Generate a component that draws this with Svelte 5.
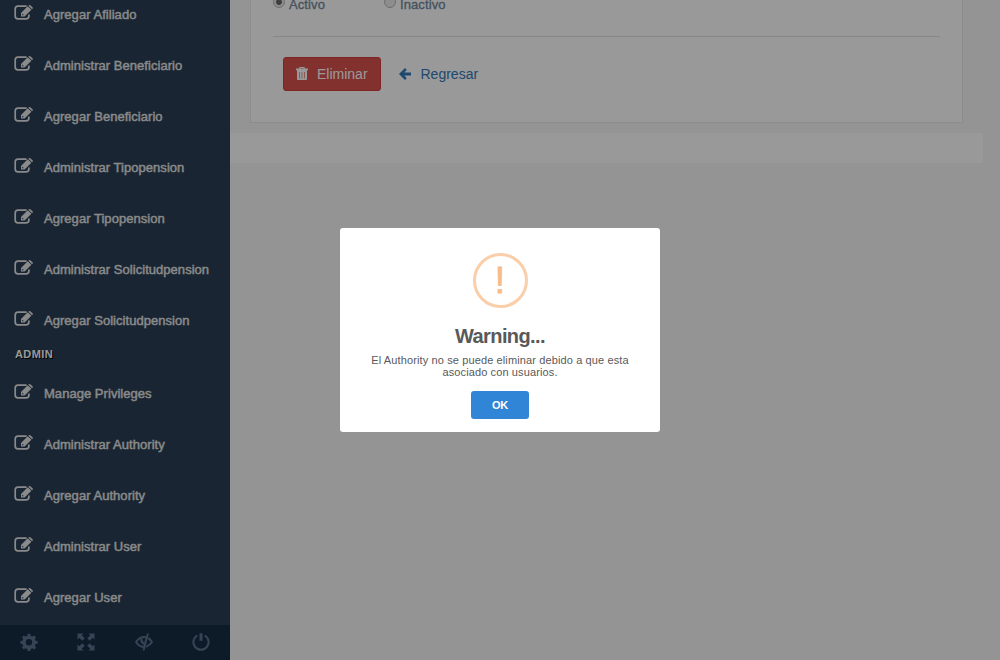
<script>
  const main = [
    'Agregar Afiliado',
    'Administrar Beneficiario',
    'Agregar Beneficiario',
    'Administrar Tipopension',
    'Agregar Tipopension',
    'Administrar Solicitudpension',
    'Agregar Solicitudpension'
  ];
  const admin = [
    'Manage Privileges',
    'Administrar Authority',
    'Agregar Authority',
    'Administrar User',
    'Agregar User'
  ];
</script>

{#snippet menu(items)}
  <ul>
    {#each items as item}
      <li>
        <svg class="edit" viewBox="0 0 19 15">
          <path class="box" d="M12.600 1.200H4Q1.200 1.200 1.200 4v6.900q0 2.900 2.800 2.900h8q2.900 0 2.900-2.900V9.400" />
          <path fill-rule="evenodd" d="M13.700 1.300l3.700 3.500-6.800 6.600H7V8zM8.200 9.200v1.100h1.200l.3-.4-1.100-1.100zM14.400.7l.4-.4q.8-.6 1.500 0l2.200 2q.7.700 0 1.500l-.5.500z" />
        </svg>
        <span>{item}</span>
      </li>
    {/each}
  </ul>
{/snippet}

<div class="page">
  <aside>
    <nav>
      {@render menu(main)}
      <h3>ADMIN</h3>
      {@render menu(admin)}
    </nav>
    <div class="tools">
      <span>
        <svg viewBox="0 0 18 18"><path fill-rule="evenodd" d="M7.700.8h2.600l.4 2.100 1.700.7 1.800-1.200 1.800 1.800-1.200 1.800.7 1.700 2.100.4v2.600l-2.100.4-.7 1.700 1.200 1.800-1.800 1.800-1.800-1.200-1.700.7-.4 2.100H7.700l-.4-2.100-1.700-.7-1.800 1.200L2 14.600l1.200-1.800-.7-1.700-2.100-.4V8.100l2.100-.4.700-1.700L2 4.200l1.800-1.800 1.800 1.200 1.700-.7zM9 6.100a3.200 3.200 0 1 0 0 6.400 3.200 3.200 0 0 0 0-6.400z" /></svg>
      </span>
      <span>
        <svg viewBox="0 0 18 18"><path d="M.5.5h6L4.700 2.300l3 3-2.400 2.400-3-3L.5 6.500zM17.500.5v6l-1.800-1.800-3 3-2.400-2.400 3-3L11.500.5zM.5 17.500v-6l1.800 1.800 3-3 2.400 2.400-3 3 1.800 1.800zM17.500 17.500h-6l1.800-1.800-3-3 2.400-2.400 3 3 1.800-1.800z" /></svg>
      </span>
      <span>
        <svg viewBox="0 0 18 18"><path d="M12 .5h1.900L9.500 17.500H7.600l.7-2.600C4.500 14.500 1.600 12 0 9c2-3.400 5.300-6 9-6l2.300.2zM10.500 5C8 4.600 3.900 6 2.200 9c1.400 2.200 3.600 3.700 6.200 4l.4-1.600C6.800 11 5.400 9.500 5.400 7.500c0-.8.2-1.400.6-2l1.500.7c-.2 1.400.5 2.600 1.900 3.200zM13.700 4C15.500 5.100 17 7 18 9c-1.500 2.700-4.100 4.900-7.200 5.700l.6-2.300c1.900-.7 3.400-1.900 4.300-3.400-.7-1.200-1.600-2.100-2.700-2.800z" /></svg>
      </span>
      <span>
        <svg viewBox="0 0 18 18"><path class="ring" d="M5.300 2.500a7.600 7.600 0 1 0 7.400 0" /><path d="M8 .2h2q.5 0 .5.500v6.600q0 .5-.5.500H8q-.5 0-.5-.5V.7q0-.5.500-.5z" /></svg>
      </span>
    </div>
  </aside>

  <main>
    <section class="panel">
      <div class="radios">
        <label><i class="dot on"></i>Activo</label>
        <label><i class="dot"></i>Inactivo</label>
      </div>
      <hr />
      <div class="actions">
        <button class="danger">
          <svg viewBox="0 0 12 13"><path fill-rule="evenodd" d="M4 0h4q.8 0 .8.800V1.500H12V3.300H0V1.500h3.200V.8Q3.200 0 4 0zm.5.900v.6h3V.9zM1 3.300h10V12q0 1-1 1H2q-1 0-1-1zM3.300 5v6.500h.6V5zm2.400 0v6.500h.6V5zm2.400 0v6.500h.6V5z" /></svg>
          Eliminar
        </button>
        <a href="#back">
          <svg viewBox="0 0 12 12"><path d="M6 0l1.700 1.700L5.400 4.500H12v3H5.400l2.300 2.800L6 12 0 6z" /></svg>
          Regresar
        </a>
      </div>
    </section>
    <footer></footer>
  </main>

  <div class="overlay">
    <div class="modal" role="dialog">
      <div class="warn">!</div>
      <h2>Warning...</h2>
      <p>El Authority no se puede eliminar debido a que esta asociado con usuarios.</p>
      <button class="ok">OK</button>
    </div>
  </div>
</div>

<style>
  :global(body) { margin: 0; }
  * { box-sizing: border-box; }
  .page {
    position: relative;
    display: flex;
    width: 1000px;
    height: 660px;
    overflow: hidden;
    background: #f7f7f7;
    font-family: "Liberation Sans", Arial, sans-serif;
    font-size: 13px;
    color: #73879c;
  }
  svg { display: block; fill: currentColor; flex: none; }
  aside {
    width: 230px;
    height: 660px;
    display: flex;
    flex-direction: column;
    background: #2a3f54;
  }
  nav { height: 625px; overflow: hidden; }
  nav ul { list-style: none; margin: 0; padding: 0; }
  nav ul:first-child { margin-top: -11px; }
  li {
    height: 51px;
    display: flex;
    align-items: center;
    gap: 11px;
    padding-left: 14px;
    color: #e7e7e7;
    letter-spacing: 0.04px;
    -webkit-text-stroke: 0.4px #e7e7e7;
  }
  .edit { width: 19px; height: 15px; margin-bottom: 5px; }
  .box { fill: none; stroke: currentColor; stroke-width: 1.7; }
  h3 {
    height: 22px;
    margin: 0;
    padding: 1px 0 0 15px;
    font-size: 11px;
    line-height: 14px;
    font-weight: bold;
    letter-spacing: 0.4px;
    color: #fff;
    text-shadow: 1px 1px #000;
  }
  .tools {
    height: 35px;
    display: grid;
    grid-template-columns: repeat(4, 1fr);
    background: #172d44;
    color: #5a738e;
  }
  .tools span { display: flex; align-items: center; justify-content: center; padding-bottom: 1px; }
  .tools svg { width: 18px; height: 18px; }
  .ring { fill: none; stroke: currentColor; stroke-width: 2; }
  main { flex: 1; }
  .panel {
    width: 713px;
    height: 123px;
    margin-left: 20px;
    padding: 0 22px;
    border: 1px solid #e6e9ed;
    border-top: 0;
    background: #fff;
  }
  .radios { height: 36px; display: flex; }
  .radios label {
    width: 111px;
    height: 10px;
    display: flex;
    gap: 4px;
    line-height: 9px;
    letter-spacing: 0.1px;
    -webkit-text-stroke: 0.3px #73879c;
  }
  .dot {
    width: 12px;
    height: 12px;
    margin-top: -4px;
    border: 1px solid #b8b8b8;
    border-radius: 50%;
    background: #ececec;
  }
  .on { background: radial-gradient(circle, #6a6a6a 0 2.500px, #ececec 3.500px); }
  hr { width: 667px; height: 1px; margin: 0; border: 0; background: #dfdfdf; }
  .actions { display: flex; align-items: center; gap: 18px; padding: 20px 0 0 10px; font-size: 14px; }
  .danger {
    width: 98px;
    height: 34px;
    display: flex;
    align-items: center;
    gap: 9px;
    padding: 0 12px;
    border: 1px solid #d43f3a;
    border-radius: 3px;
    background: #d9534f;
    color: #fff;
    font: inherit;
  }
  .danger svg { width: 12px; height: 13px; margin-bottom: 1px; }
  a { display: flex; align-items: center; gap: 9.500px; color: #337ab7; text-decoration: none; }
  a svg { width: 12px; height: 12px; }
  footer { width: 753px; height: 30px; margin-top: 10px; background: #fff; }
  .overlay {
    position: absolute;
    inset: 0;
    display: flex;
    align-items: center;
    justify-content: center;
    background: rgba(0, 0, 0, 0.4);
  }
  .modal {
    width: 320px;
    height: 204px;
    display: flex;
    flex-direction: column;
    align-items: center;
    padding-top: 25px;
    border-radius: 3px;
    background: #fff;
    color: #595959;
    text-align: center;
  }
  .warn {
    width: 55px;
    height: 55px;
    border: 3px solid #facea8;
    border-radius: 50%;
    font-size: 37px;
    line-height: 50px;
    color: #f8bb86;
    -webkit-text-stroke: 0.8px #f8bb86;
  }
  h2 { margin: 16px 0 0; font-size: 20px; line-height: 24px; letter-spacing: -0.6px; }
  p { width: 270px; margin: 6px 0 0; font-size: 11px; line-height: 12px; letter-spacing: 0.12px; }
  .ok {
    width: 58px;
    height: 28px;
    margin-top: 13px;
    padding: 0;
    border: 0;
    border-radius: 3px;
    background: #3085d6;
    color: #fff;
    font: bold 11px "Liberation Sans", Arial, sans-serif;
    letter-spacing: -0.3px;
  }
</style>
